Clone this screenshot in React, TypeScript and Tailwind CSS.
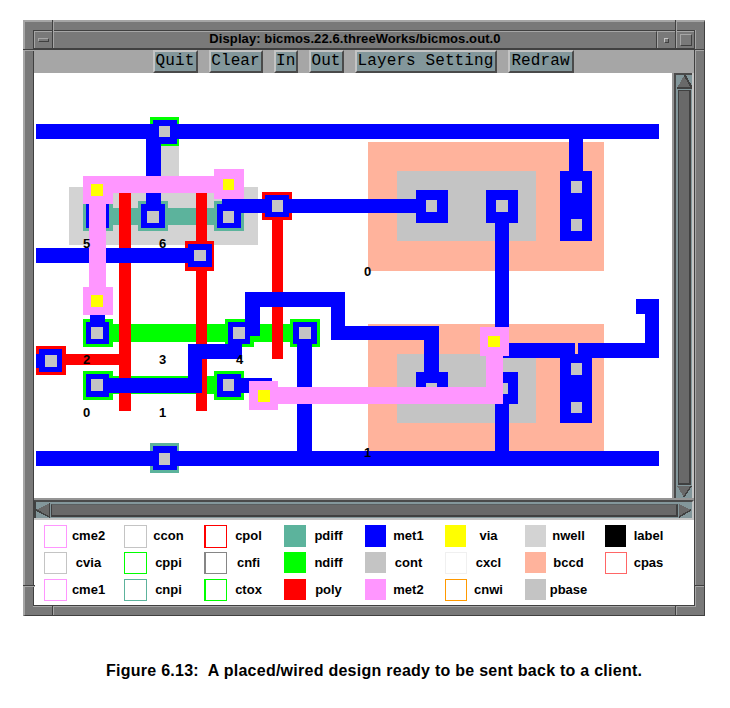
import React from "react";

type Box = [x1: number, y1: number, x2: number, y2: number];

const C = {
  met1: "#0000ff",
  met2: "#ff96ff",
  via: "#ffff00",
  cont: "#c4c4c4",
  pdiff: "#5cb39c",
  ndiff: "#00ff00",
  poly: "#ff0000",
  nwell: "#d3d3d3",
  bccd: "#ffb39c",
};

const layers: { fill: string; boxes: Box[] }[] = [
  { fill: C.nwell, boxes: [[69, 187, 258, 245], [150, 146, 179, 187]] },
  { fill: C.bccd, boxes: [[368, 142, 604, 271], [368, 324, 604, 451]] },
  { fill: C.cont, boxes: [[397, 171, 536, 241], [397, 354, 536, 423]] },
  {
    fill: C.pdiff,
    boxes: [[83, 208, 244, 225], [83, 201, 113, 231], [138, 201, 168, 231], [214, 201, 244, 231], [150, 443, 179, 473]],
  },
  {
    fill: C.ndiff,
    boxes: [
      [150, 117, 179, 146], [83, 324, 320, 342], [83, 319, 113, 347], [225, 319, 254, 347],
      [290, 319, 320, 347], [83, 376, 244, 394], [83, 371, 113, 400], [214, 371, 244, 400],
    ],
  },
  {
    fill: C.poly,
    boxes: [
      [119, 187, 131, 411], [196, 187, 207, 411], [272, 218, 283, 359], [185, 241, 214, 271],
      [262, 192, 292, 220], [36, 346, 66, 375], [66, 354, 119, 365],
    ],
  },
  {
    fill: C.met1,
    boxes: [
      [36, 124, 659, 139], [153, 120, 177, 144], [146, 124, 161, 210], [86, 204, 109, 228],
      [141, 204, 165, 228], [217, 204, 241, 228], [222, 199, 416, 213], [265, 195, 289, 217],
      [36, 248, 188, 263], [188, 244, 212, 267], [90, 310, 105, 322], [86, 322, 109, 344],
      [36, 354, 39, 368], [39, 349, 62, 372], [86, 374, 109, 397], [109, 378, 202, 393],
      [188, 344, 202, 393], [188, 344, 242, 359], [228, 322, 250, 344], [245, 292, 260, 336],
      [245, 292, 345, 307], [331, 292, 345, 340], [331, 326, 439, 340], [424, 326, 439, 372],
      [293, 322, 317, 344], [297, 344, 312, 451], [217, 374, 241, 397], [241, 378, 272, 393],
      [36, 451, 659, 466], [153, 446, 177, 470], [416, 190, 448, 223], [486, 190, 518, 223],
      [495, 223, 509, 340], [569, 139, 583, 171], [560, 171, 592, 241], [416, 372, 448, 404],
      [486, 372, 518, 404], [495, 404, 509, 451], [503, 343, 659, 358], [645, 299, 659, 358],
      [636, 299, 659, 314], [560, 358, 592, 423],
    ],
  },
  { fill: C.bccd, boxes: [[575, 343, 578, 354]] },
  {
    fill: C.cont,
    boxes: [
      [159, 126, 170, 137], [147, 211, 159, 223], [223, 211, 234, 223], [272, 200, 283, 212],
      [194, 250, 206, 261], [91, 327, 103, 339], [45, 355, 57, 367], [91, 379, 103, 391],
      [233, 327, 245, 339], [299, 327, 311, 339], [223, 379, 234, 391], [159, 453, 170, 465],
      [426, 200, 437, 212], [496, 200, 508, 212], [571, 181, 582, 193], [571, 219, 582, 231],
      [426, 383, 437, 394], [496, 383, 508, 394], [571, 363, 582, 375], [571, 402, 582, 413],
    ],
  },
  {
    fill: C.met2,
    boxes: [
      [83, 176, 244, 193], [83, 176, 113, 204], [214, 169, 244, 199], [89, 193, 106, 300],
      [83, 287, 113, 315], [249, 381, 278, 410], [278, 387, 503, 404], [486, 350, 503, 404],
      [480, 327, 509, 356],
    ],
  },
  {
    fill: C.via,
    boxes: [[91, 184, 103, 196], [223, 179, 234, 190], [91, 295, 103, 307], [258, 390, 270, 402], [488, 336, 500, 347]],
  },
];

const marks: [string, number, number][] = [
  ["5", 83, 248], ["6", 159, 248], ["0", 364, 276], ["2", 83, 364], ["3", 159, 364],
  ["4", 236, 364], ["0", 83, 417], ["1", 159, 417], ["1", 364, 457],
];

function ChipLayout() {
  return (
    <svg className="block h-[425px] w-[638px] bg-white" viewBox="34 73 638 425">
      <g shapeRendering="crispEdges">
        {layers.map((l, i) => (
          <g key={i} fill={l.fill}>
            {l.boxes.map(([a, b, c, d], j) => (
              <rect key={j} x={a} y={b} width={c - a} height={d - b} />
            ))}
          </g>
        ))}
      </g>
      <g className="font-['Liberation_Sans',sans-serif] text-[13px] font-bold" fill="#000">
        {marks.map(([t, x, y], i) => (
          <text key={i} x={x} y={y}>{t}</text>
        ))}
      </g>
    </svg>
  );
}

function ToolButton({ label, width }: { label: string; width: string }) {
  return (
    <button
      className={`${width} h-[23px] shrink-0 overflow-hidden whitespace-nowrap border-l-2 border-t-2 border-r-2 border-b-2 border-l-[#c4c4c4] border-t-[#c4c4c4] border-r-[#4a4a4a] border-b-[#4a4a4a] bg-[#83979b] pb-[2px] pr-px text-center font-['Liberation_Mono',monospace] text-base leading-[16px] tracking-[0.1px] text-black`}
    >
      {label}
    </button>
  );
}

type Swatch = { name: string; box: string };

const legend: Swatch[][] = [
  [
    { name: "cme2", box: "size-[23px] border border-[#ff96ff]" },
    { name: "cvia", box: "h-[22px] w-[23px] border border-[#c4c4c4]" },
    { name: "cme1", box: "h-[22px] w-[23px] border border-[#ff96ff]" },
  ],
  [
    { name: "ccon", box: "size-[23px] border border-[#c4c4c4]" },
    { name: "cppi", box: "h-[22px] w-[23px] border border-[#00ff00]" },
    { name: "cnpi", box: "h-[22px] w-[23px] border border-[#5cb39c]" },
  ],
  [
    { name: "cpol", box: "size-[23px] border border-l-2 border-[#ff0000]" },
    { name: "cnfi", box: "h-[22px] w-[23px] border border-l-2 border-[#868686]" },
    { name: "ctox", box: "h-[22px] w-[23px] border border-l-2 border-[#00ff00]" },
  ],
  [
    { name: "pdiff", box: "size-[22px] bg-[#5cb39c]" },
    { name: "ndiff", box: "h-[21px] w-[22px] bg-[#00ff00]" },
    { name: "poly", box: "h-[21px] w-[22px] bg-[#ff0000]" },
  ],
  [
    { name: "met1", box: "ml-px h-[22px] w-[21px] bg-[#0000ff]" },
    { name: "cont", box: "ml-px size-[21px] bg-[#c4c4c4]" },
    { name: "met2", box: "ml-px size-[21px] bg-[#ff96ff]" },
  ],
  [
    { name: "via", box: "ml-px h-[22px] w-[21px] bg-[#ffff00]" },
    { name: "cxcl", box: "ml-px size-[22px] border border-[#f0f0f0]" },
    { name: "cnwi", box: "ml-px size-[22px] border border-[#ff9900]" },
  ],
  [
    { name: "nwell", box: "ml-px h-[22px] w-[21px] bg-[#d3d3d3]" },
    { name: "bccd", box: "ml-px size-[21px] bg-[#ffb39c]" },
    { name: "pbase", box: "ml-px size-[21px] bg-[#c4c4c4]" },
  ],
  [
    { name: "label", box: "ml-px h-[22px] w-[21px] bg-black" },
    { name: "cpas", box: "ml-px size-[22px] border border-[#ff6666]" },
  ],
];

function VerticalScrollbar() {
  return (
    <div className="flex h-[425px] w-[22px] flex-col items-center border-l-2 border-r-2 border-l-[#959595] border-r-[#c4c4c4] bg-[#83979b]">
      <div className="flex h-full w-full flex-col border-l-2 border-t-2 border-[#4a4a4a]">
        <svg className="h-[14px] w-4 shrink-0" viewBox="0 0 16 14" shapeRendering="crispEdges">
          <path d="M8.5 0 L1 13 H16 Z" fill="#696969" />
          <path d="M8.5 0 L16 13 M1 13 H16" stroke="#404040" strokeWidth="2" />
        </svg>
        <div className="ml-[2px] mt-px w-[13px] grow border-b-2 border-l border-r-2 border-t border-[#404040] bg-[#696969]" />
        <svg className="h-[13px] w-4 shrink-0" viewBox="0 0 16 13" shapeRendering="crispEdges">
          <path d="M1 1 H15 L8 12 Z" fill="#696969" />
          <path d="M15 1 L8 12" stroke="#404040" strokeWidth="1.5" />
        </svg>
      </div>
    </div>
  );
}

function HorizontalScrollbar() {
  return (
    <div className="h-[22px] w-[660px] border-b-2 border-t-2 border-b-[#c4c4c4] border-t-[#959595] bg-[#83979b]">
      <div className="flex h-[18px] border-l-2 border-r-2 border-t-2 border-l-[#404040] border-r-[#c4c4c4] border-t-[#4a4a4a]">
        <svg className="h-4 w-[15px] shrink-0" viewBox="0 0 15 16" shapeRendering="crispEdges">
          <path d="M14 1 V15 L0 8 Z" fill="#696969" />
          <path d="M13.5 1 V15 L0 8" fill="none" stroke="#404040" strokeWidth="1.5" />
        </svg>
        <div className="mt-[2px] h-[13px] w-[627px] border-b-2 border-l border-r-2 border-t border-[#404040] border-t-[#5a5f60] bg-[#696969]" />
        <svg className="h-4 w-[14px] shrink-0" viewBox="0 0 14 16" shapeRendering="crispEdges">
          <path d="M1 2 V15 L13 8 Z" fill="#696969" />
          <path d="M1 15 L13 8" stroke="#404040" strokeWidth="1.5" />
        </svg>
      </div>
    </div>
  );
}

function FrameTicks() {
  return (
    <>
      <div className="absolute -top-[2px] left-[27px] h-[12px] w-[2px] border-l border-[#404040] bg-[#a6a6a6]" />
      <div className="absolute -top-[2px] left-[650px] h-[12px] w-[2px] border-l border-[#404040] bg-[#a6a6a6]" />
      <div className="absolute bottom-0 left-[27px] h-[9px] w-[2px] border-l border-[#404040] bg-[#a6a6a6]" />
      <div className="absolute bottom-0 left-[650px] h-[9px] w-[2px] border-l border-[#404040] bg-[#a6a6a6]" />
      <div className="absolute -left-[2px] top-[27px] h-[2px] w-[12px] border-t border-[#404040] bg-[#a6a6a6]" />
      <div className="absolute right-0 top-[27px] h-[2px] w-[9px] border-t border-[#404040] bg-[#a6a6a6]" />
      <div className="absolute -left-[2px] top-[563px] h-[2px] w-[12px] border-t border-[#404040] bg-[#a6a6a6]" />
      <div className="absolute right-0 top-[563px] h-[2px] w-[9px] border-t border-[#404040] bg-[#a6a6a6]" />
    </>
  );
}

export default function App() {
  return (
    <div className="h-[708px] w-[730px] overflow-hidden bg-white pl-[23px] pt-[20px] text-black">
      <div className="relative h-[596px] w-[682px] border-b border-l-2 border-r border-t-2 border-b-[#404040] border-l-[#a6a6a6] border-r-[#404040] border-t-[#a6a6a6] bg-[#797979] pl-[8px] pt-[8px]">
        <div className="h-[577px] w-[663px] border-b border-r border-[#a6a6a6]">
          <div className="h-[576px] w-[662px] border border-[#404040]">
            <header className="flex h-[19px] w-[660px] border-b-2 border-[#404040] font-['Liberation_Sans',sans-serif]">
              <div className="flex w-[19px] items-center justify-center border-l border-r border-t border-l-[#a6a6a6] border-r-[#404040] border-t-[#a6a6a6]">
                <div className="h-1 w-[11px] border border-b-[#404040] border-l-[#a6a6a6] border-r-[#404040] border-t-[#a6a6a6]" />
              </div>
              <h1 className="flex-1 overflow-hidden whitespace-nowrap border-l border-r border-t border-l-[#a6a6a6] border-r-[#404040] border-t-[#a6a6a6] text-center text-[13px] font-bold leading-[13px] tracking-[0.09px]">
                Display: bicmos.22.6.threeWorks/bicmos.out.0
              </h1>
              <div className="flex w-[19px] items-center justify-center border-l border-r border-t border-l-[#a6a6a6] border-r-[#404040] border-t-[#a6a6a6]">
                <div className="size-[5px] border border-b-[#404040] border-l-[#c4c4c4] border-r-[#404040] border-t-[#c4c4c4]" />
              </div>
              <div className="flex w-[18px] items-center justify-center border-l border-t border-[#a6a6a6]">
                <div className="size-[12px] border border-b-[#404040] border-l-[#a6a6a6] border-r-[#404040] border-t-[#a6a6a6]" />
              </div>
            </header>
            <nav className="flex h-[23px] w-[660px] gap-[11px] bg-[#a6a6a6] pl-[119px]">
              <ToolButton label="Quit" width="w-[45px]" />
              <ToolButton label="Clear" width="w-[54px]" />
              <ToolButton label="In" width="w-[24px]" />
              <ToolButton label="Out" width="w-[35px]" />
              <ToolButton label="Layers Setting" width="w-[142px]" />
              <ToolButton label="Redraw" width="w-[66px]" />
            </nav>
            <main className="flex w-[660px]">
              <ChipLayout />
              <VerticalScrollbar />
            </main>
            <HorizontalScrollbar />
            <section className="flex h-[85px] w-[660px] bg-white pl-[10px] pt-[5px] font-['Liberation_Sans',sans-serif] text-[13px] font-bold leading-[21px]">
              {legend.map((col, i) => (
                <div key={i} className="flex w-[80px] shrink-0 flex-col">
                  {col.map((s) => (
                    <div key={s.name} className="flex h-[27px] shrink-0 items-start">
                      <div className="w-6 shrink-0">
                        <div className={s.box} />
                      </div>
                      <div className="w-[41px] text-center">{s.name}</div>
                    </div>
                  ))}
                </div>
              ))}
            </section>
          </div>
        </div>
        <FrameTicks />
      </div>
      <p className="ml-[83px] mt-[45px] whitespace-pre font-['Liberation_Sans',sans-serif] text-base font-bold leading-[20px] tracking-[0.26px]">
        {"Figure 6.13:  A placed/wired design ready to be sent back to a client."}
      </p>
    </div>
  );
}
